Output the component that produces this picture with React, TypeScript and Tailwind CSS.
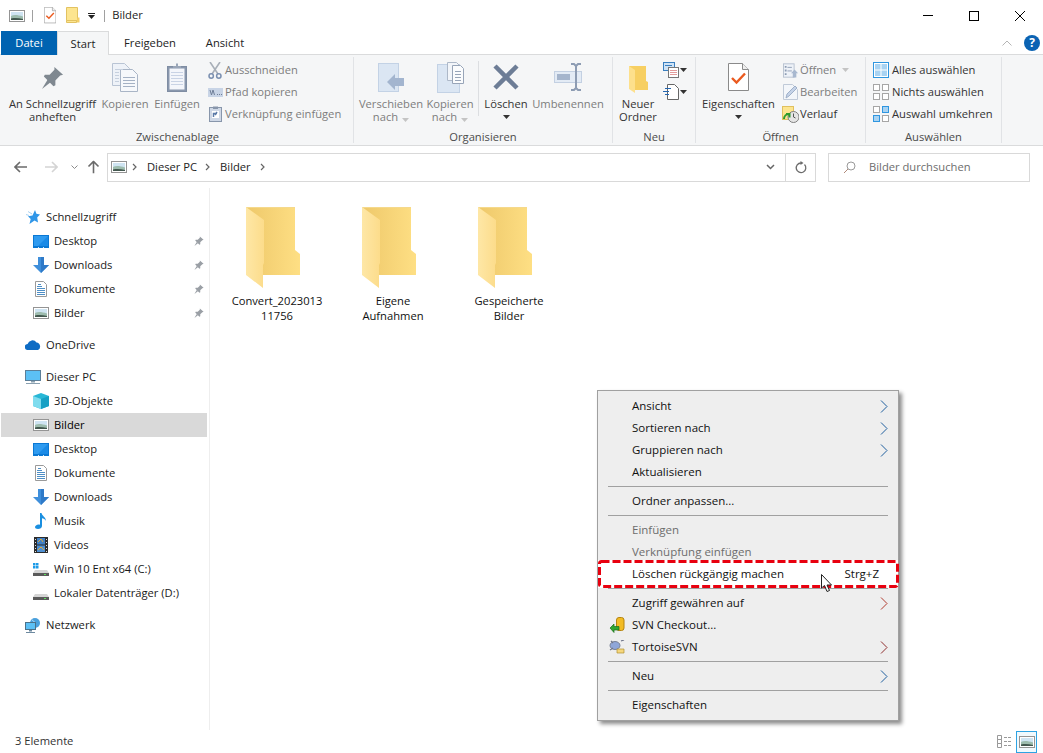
import React from 'react';

const FONT = "font-['Open_Sans','Liberation_Sans',sans-serif]";

// --- icons ---
const PictureIcon = ({ className = '' }: { className?: string }) => (
  <svg viewBox="0 0 16 12" width="16" height="12" className={className}>
    <rect x="0.5" y="0.5" width="15" height="11" fill="#fff" stroke="#949494" />
    <rect x="2" y="2" width="12" height="8" fill="#cfe4f2" />
    <path d="M2 6c3-1.500 7-1 12 .5V10H2z" fill="#9dbcae" />
    <path d="M2 8.500c4-.7 8-.4 12 .5v1H2z" fill="#43584f" />
  </svg>
);

const MiniFolder = () => (
  <svg viewBox="0 0 14 17" width="14" height="17">
    <path d="M.5.5h11v13h-11z" fill="#fde58f" stroke="#e2c261" />
    <path d="M11.500 10.500h2v5h-3z" fill="#f4cf69" />
    <path d="M.5 13.500h10v2h-10z" fill="#fde58f" stroke="#e2c261" />
  </svg>
);

const DocCheck = ({ size = 1 }: { size?: number }) => (
  <svg viewBox="0 0 21 28" width={21 * size} height={28 * size}>
    <path d="M.5.5h14l6 6v21H.5z" fill="#fff" stroke="#8a8a8a" />
    <path d="M14.500.5v6h6" fill="#eee" stroke="#8a8a8a" />
    <path d="M4 15l4.500 4.500L17 10.500" fill="none" stroke="#ea5a1f" strokeWidth="2.400" />
  </svg>
);

const Pin = ({ w = 24, color = '#7f8890' }: { w?: number; color?: string }) => (
  <svg viewBox="0 0 24 24" width={w} height={w}>
    <path d="M14 1l9 8-3 1-5 5 0 5-2 1-10-10 1-2 5 0 5-5z" fill={color} />
    <path d="M7 14l3 3-9 7z" fill={color} />
  </svg>
);

const CopyPages = () => (
  <svg viewBox="0 0 26 29" width="26" height="29">
    <path d="M.5.5h12l5 5v17H.5z" fill="#eef2f8" stroke="#b9c4d4" />
    <path d="M8.500 6.500h12l5 5v17h-17z" fill="#f6f8fb" stroke="#a9b5c6" />
    <path d="M11 14.500h12M11 17.500h12M11 20.500h12M11 23.500h12" stroke="#a4b1c4" />
    <path d="M3 6.500h8M3 9.500h4M3 12.500h4M3 15.500h4M3 18.500h4" stroke="#c6d0de" />
  </svg>
);

const Clipboard = () => (
  <svg viewBox="0 0 20 29" width="20" height="29">
    <rect x="0.5" y="3.500" width="19" height="25" fill="#8997ad" stroke="#7f8da3" />
    <rect x="2.500" y="5.500" width="15" height="21" fill="#f4f6fb" />
    <path d="M4 9.500h12M4 12.500h12M4 15.500h12M4 18.500h12M4 21.500h12" stroke="#c9d3e5" />
    <path d="M6 5V3h3V0.500h2V3h3v2z" fill="#9aa6b8" />
  </svg>
);

const Scissors = () => (
  <svg viewBox="0 0 14 17" width="14" height="17" fill="none">
    <path d="M2 0l8 12M12 0L4 12" stroke="#a8afb8" strokeWidth="1.600" />
    <circle cx="3.200" cy="14" r="2.200" stroke="#7a8fb0" strokeWidth="1.500" />
    <circle cx="10.800" cy="14" r="2.200" stroke="#7a8fb0" strokeWidth="1.500" />
  </svg>
);

const PathIcon = () => (
  <svg viewBox="0 0 15 9" width="15" height="9">
    <rect x="0" y="0" width="15" height="9" fill="#c8d4e6" />
    <path d="M2 2l1.500 5L5 2l1.500 5M9 6.500h1M11 6.500h1M13 6.500h1" stroke="#6f7f98" fill="none" />
  </svg>
);

const ShortcutClip = () => (
  <svg viewBox="0 0 13 16" width="13" height="16">
    <rect x="0.5" y="1.500" width="12" height="14" fill="#cfd8e6" stroke="#8896ab" />
    <path d="M4 0.500h5V3H4z" fill="#8896ab" />
    <rect x="3" y="5" width="7" height="7" fill="#fff" />
    <path d="M4.500 11V7.500H8M8 6l-2 3" stroke="#5c7ba8" strokeWidth="1.500" fill="none" />
  </svg>
);

const MoveTo = () => (
  <svg viewBox="0 0 26 29" width="26" height="29">
    <rect x="0.5" y="0.5" width="20" height="28" fill="#dbe6f3" stroke="#c3d2e5" />
    <path d="M9 19l8-8v4h9v8h-9v4z" fill="#a3b5cf" />
  </svg>
);

const CopyTo = () => (
  <svg viewBox="0 0 27 31" width="27" height="31">
    <rect x="0.5" y="2.500" width="22" height="28" fill="#dbe6f3" stroke="#c3d2e5" />
    <path d="M10.500.5h9l4 4v14h-13z" fill="#f2f5f9" stroke="#adb8c8" />
    <path d="M15.500 3.500h8l3 3v15h-11z" fill="#fbfcfd" stroke="#98a5b8" />
    <path d="M18 9.500h6M18 12.500h6M18 15.500h6M18 18.500h6" stroke="#98a5b8" />
  </svg>
);

const BigX = () => (
  <svg viewBox="0 0 26 26" width="26" height="26">
    <path d="M2 2l22 22M24 2L2 24" stroke="#6d7d96" strokeWidth="4.500" />
  </svg>
);

const RenameIcon = () => (
  <svg viewBox="0 0 28 28" width="28" height="28" fill="none">
    <rect x="0.5" y="8.500" width="27" height="11" fill="#e3ebf5" stroke="#c3d0e2" />
    <rect x="3" y="11" width="13" height="6" fill="#a5b5cc" />
    <path d="M17 1h3l2 2 2-2h3M17 27h3l2-2 2 2h3M22 3v22" stroke="#8d9cb3" strokeWidth="2" />
  </svg>
);

const NewFolder = () => (
  <svg viewBox="0 0 19 27" width="19" height="27" className="mt-[4px]">
    <path d="M0 0h17v15l2 1v8H6V17z" fill="#f7cf62" />
    <path d="M0 0l6 4v23l-6-4z" fill="#fde08c" />
  </svg>
);

const NewFile = () => (
  <svg viewBox="0 0 16 16" width="16" height="16" fill="none">
    <path d="M4.500.5h7l4 4v11h-11z" fill="#fff" stroke="#666" />
    <path d="M2 4.500h6M0 7.500h6M2 10.500h4" stroke="#2466b0" />
  </svg>
);

const EasyAccess = () => (
  <svg viewBox="0 0 16 16" width="16" height="16">
    <rect x="0.5" y="0.5" width="11" height="8" fill="#cfe3f6" stroke="#3a7fbf" />
    <path d="M2 3.500h7" stroke="#3a7fbf" />
    <rect x="5.500" y="5.500" width="10" height="10" fill="#fff" stroke="#777" />
    <path d="M7 8.500h7M7 10.500h7M7 12.500h7" stroke="#e39c9c" />
  </svg>
);

const OpenSmall = () => (
  <svg viewBox="0 0 18 16" width="16" height="15">
    <rect x="0.5" y="0.5" width="12" height="15" fill="#eef2f8" stroke="#b5bfce" />
    <path d="M2 3h2v2H2zM2 7h2v2H2zM2 11h2v2H2z" fill="#8d9cb3" />
    <path d="M5 4.500h5M5 8.500h5" stroke="#8d9cb3" />
    <path d="M13 7l4 4h-2v5h-4v-5H9z" fill="#a8b8cf" />
  </svg>
);

const EditSmall = () => (
  <svg viewBox="0 0 15 16" width="15" height="16">
    <path d="M.5.5h9l5 5v10H.5z" fill="#f3f6fa" stroke="#c0cad8" />
    <path d="M3 14l1-4 8-8 2 2-8 8z" fill="#c5d3e8" stroke="#9fb0c9" />
  </svg>
);

const HistorySmall = () => (
  <svg viewBox="0 0 17 17" width="17" height="17">
    <rect x="0.5" y="0.5" width="11" height="13" fill="#fde58f" stroke="#e0c05f" />
    <circle cx="11.500" cy="11" r="5.500" fill="#e5e5e5" stroke="#7f7f7f" />
    <path d="M11.500 7.500V11l2 1" stroke="#555" fill="none" />
    <path d="M2 13a5 5 0 0 1 5-5M4 8h3.500v3.500" fill="none" stroke="#2f9a2c" strokeWidth="2" />
  </svg>
);

const SelectGrid = ({ variant }: { variant: 'all' | 'none' | 'invert' }) => {
  const cells = [
    [0, 0],
    [9, 0],
    [0, 9],
    [9, 9],
  ];
  return (
    <svg viewBox="0 0 16 16" width="16" height="16">
      {variant === 'all' && <rect x="0.5" y="0.5" width="15" height="15" fill="#fff" stroke="#2f96e0" />}
      {cells.map(([x, y], i) => {
        const on = variant === 'all' || (variant === 'invert' && (i === 1 || i === 2));
        if (variant === 'all') {
          return <rect key={i} x={x === 0 ? 2 : 8.500} y={y === 0 ? 2 : 8.500} width="5.500" height="5.500" fill="#a9d3f2" />;
        }
        return (
          <rect
            key={i}
            x={x + 0.5}
            y={y + 0.5}
            width="6"
            height="6"
            fill={on ? '#a9d3f2' : '#fff'}
            stroke={on ? '#2f96e0' : '#a6a6a6'}
          />
        );
      })}
    </svg>
  );
};

const Caret = ({ color = '#333' }: { color?: string }) => (
  <svg viewBox="0 0 7 4" width="7" height="4" className="inline-block">
    <path d="M0 0h7L3.500 4z" fill={color} />
  </svg>
);

const Crumb = () => (
  <svg viewBox="0 0 5 8" width="5" height="8">
    <path d="M1 1l3 3-3 3" fill="none" stroke="#666" strokeWidth="1.200" />
  </svg>
);

const Arrow = ({ color, rotate }: { color: string; rotate: string }) => (
  <svg viewBox="0 0 13 12" width="13" height="12" className={rotate}>
    <path d="M6 1L1 6l5 5M1 6h12" fill="none" stroke={color} strokeWidth="1.600" />
  </svg>
);

// navigation pane icons
const DesktopIcon = () => (
  <svg viewBox="0 0 16 13" width="16" height="13">
    <rect x="0" y="0" width="16" height="13" fill="#0a78d4" />
    <path d="M1 1h14v10H1z" fill="#2f9bf0" />
    <path d="M15 1v10H5z" fill="#1a8ae6" />
    <path d="M5 12h1v1H5zM10 12h1v1h-1z" fill="#cfe8fb" />
  </svg>
);

const DownloadIcon = () => (
  <svg viewBox="0 0 16 16" width="16" height="16">
    <path d="M5 0h6v8h5l-8 8-8-8h5z" fill="#3f8fdb" />
    <path d="M8 0h3v8h5l-8 8z" fill="#2f7ac8" />
  </svg>
);

const DocIcon = () => (
  <svg viewBox="0 0 12 16" width="12" height="16">
    <path d="M.5.5h8l3 3v12H.5z" fill="#fff" stroke="#9a9a9a" />
    <path d="M3 3.500h3M2 5.500h5M2 7.500h8M2 9.500h8M2 11.500h8M2 13.500h8" stroke="#4f8fc6" />
  </svg>
);

const StarIcon = () => (
  <svg viewBox="0 0 14 14" width="14" height="14">
    <path d="M9 0l1.400 3.800L14 4.500l-2.800 3 .8 5L8.500 10.500 3.500 14l1.200-5L2 6.300 6.500 5.500z" fill="#2f96e8" />
    <path d="M2 1.500l4 2.500M0 4.500l3 1" stroke="#a8d2f2" />
  </svg>
);

const CloudIcon = () => (
  <svg viewBox="0 0 16 10" width="16" height="10">
    <path d="M3 10a3 3 0 0 1-.4-6A5 5 0 0 1 11.500 2.500 4 4 0 0 1 13 10z" fill="#0e6cc4" />
  </svg>
);

const PcIcon = () => (
  <svg viewBox="0 0 16 14" width="16" height="14">
    <rect x="0.5" y="0.5" width="15" height="10" fill="#5cc0f5" stroke="#5b7f99" />
    <path d="M6 11h4v1.500H6zM1 13h14v1H1z" fill="#8aa0b0" />
  </svg>
);

const CubeIcon = () => (
  <svg viewBox="0 0 16 16" width="16" height="16">
    <path d="M8 0l8 3v10l-8 3-8-3V3z" fill="#28b7d6" />
    <path d="M8 6l8-3v10l-8 3z" fill="#16a0c4" />
    <path d="M0 3l8 3v10l-8-3z" fill="#7fdcee" />
  </svg>
);

const MusicIcon = () => (
  <svg viewBox="0 0 12 16" width="12" height="16">
    <path d="M5 0h1.500c.5 3 4.500 4 4.500 8-1-2-2.500-2.500-4-2.800V13c0 2-2 3-4 3s-3-1-3-2 1.500-2.500 3.500-2.500c.5 0 1 0 1.500.2z" fill="#1a8fe0" />
  </svg>
);

const VideoIcon = () => (
  <svg viewBox="0 0 14 16" width="14" height="16">
    <rect width="14" height="16" fill="#2c2c2c" />
    <rect x="3" y="1" width="8" height="6.500" fill="#3f7fc4" />
    <rect x="3" y="8.500" width="8" height="6.500" fill="#4f8fd0" />
    <path d="M4 5l3-3 2 3M4 13l3-3 3 3" stroke="#e0a93a" fill="none" />
    <path d="M1 2.500h1M1 5.500h1M1 8.500h1M1 11.500h1M1 14.500h1M12 2.500h1M12 5.500h1M12 8.500h1M12 11.500h1M12 14.500h1" stroke="#ddd" />
  </svg>
);

const DriveIcon = ({ win = false }: { win?: boolean }) => (
  <svg viewBox="0 0 16 13" width="16" height="13">
    {win && <path d="M0 0h2.500v2.500H0zM3 0h2.500v2.500H3zM0 3h2.500v2.500H0zM3 3h2.500v2.500H3z" fill="#1d9be8" />}
    <path d="M2 7h12l2 3v3H0v-3z" fill="#d5d5d5" />
    <rect x="0" y="10" width="16" height="3" fill="#5b5b5b" />
    <rect x="11" y="11" width="2" height="1" fill="#5ee05e" />
  </svg>
);

const NetworkIcon = () => (
  <svg viewBox="0 0 16 15" width="16" height="15">
    <circle cx="10" cy="5" r="5" fill="#4aa0dc" />
    <path d="M7 2c2 1 4 3 3 7" stroke="#cfe8fb" fill="none" />
    <rect x="0.5" y="4.500" width="10" height="7" fill="#5cc0f5" stroke="#4b7189" />
    <path d="M4 12h3v1.500H4zM1 14h9v1H1z" fill="#6e8aa0" />
  </svg>
);

const BigFolder = () => (
  <svg viewBox="0 0 54 81" width="54" height="81" className="mr-[8px] block">
    <defs>
      <linearGradient id="fb" x1="0" x2="1" y1="0" y2="0">
        <stop offset="0" stopColor="#eec86a" />
        <stop offset="1" stopColor="#fedf84" />
      </linearGradient>
      <linearGradient id="ff" x1="0" x2="1" y1="0" y2="0">
        <stop offset="0" stopColor="#fee7a6" />
        <stop offset="1" stopColor="#fcdc8b" />
      </linearGradient>
    </defs>
    <path d="M0 0h49v43l5 4v21H17z" fill="url(#fb)" />
    <path d="M0 0h49v1H0z" fill="#f5d98c" />
    <path d="M0 0l18 13v43l-1 2v23L0 68z" fill="url(#ff)" />
  </svg>
);

const SvgCheckout = () => (
  <svg viewBox="0 0 16 16" width="16" height="16">
    <rect x="7.500" y="0.500" width="7.500" height="13" rx="2.500" fill="#f2bb24" stroke="#b58410" />
    <path d="M1 11l4-4v2.500h5V13H5v2.500z" fill="#2fa52f" stroke="#1b701b" strokeWidth="0.700" />
  </svg>
);

const SvgTortoise = () => (
  <svg viewBox="0 0 16 14" width="16" height="14">
    <ellipse cx="6" cy="5.500" rx="5" ry="4" fill="#8fa6d8" stroke="#7a8296" />
    <path d="M1 10l3-2M2 1l2 2M12 1l3-1" stroke="#70768a" strokeWidth="1.300" />
    <path d="M8 9h7v4H8z" fill="#f6d77d" stroke="#b08f30" strokeWidth="0.700" />
  </svg>
);

const MenuChevron = ({ color = '#1f5f9e' }: { color?: string }) => (
  <svg viewBox="0 0 8 13" width="8" height="13">
    <path d="M1 .5l6 6-6 6" fill="none" stroke={color} strokeWidth="1" />
  </svg>
);

const CursorIcon = () => (
  <svg viewBox="0 0 13 19" width="13" height="19">
    <path d="M.5.5v13.500l3-2.500 2.500 6 2.500-1-2.500-5.500h4.500z" fill="#fff" stroke="#222" />
  </svg>
);

// --- ribbon parts ---
const Group = ({ label, width, children }: { label: string; width: string; children: React.ReactNode }) => (
  <div className={`${width} flex flex-col border-r border-[#e1e3e6]`}>
    <div className="flex h-[72px] items-start">{children}</div>
    <div className="mt-auto h-[15px] text-center leading-[17px] text-[#4c4c4c]">{label}</div>
  </div>
);

const LargeButton = ({
  icon,
  lines,
  width,
  disabled = false,
  caret,
}: {
  icon: React.ReactNode;
  lines: string[];
  width: string;
  disabled?: boolean;
  caret?: 'line1' | 'line2';
}) => (
  <div className={`${width} flex flex-col items-center ${disabled ? 'text-[#7d7d7d]' : 'text-[#333]'}`}>
    <div className="flex h-[40px] items-center justify-center">{icon}</div>
    {lines.map((l, i) => (
      <div key={i} className="whitespace-nowrap leading-[13px]">
        {l}
        {caret === 'line2' && i === 1 && (
          <span className="ml-1 align-middle">
            <Caret color="#c4c4c4" />
          </span>
        )}
      </div>
    ))}
    {caret === 'line1' && (
      <div className="flex h-[13px] items-center">
        <Caret />
      </div>
    )}
  </div>
);

const SmallButton = ({
  icon,
  label,
  disabled = false,
  iconWidth = 'w-[18px]',
  caret = false,
}: {
  icon: React.ReactNode;
  label: string;
  disabled?: boolean;
  iconWidth?: string;
  caret?: boolean;
}) => (
  <div className={`flex h-[22px] items-center whitespace-nowrap ${disabled ? 'text-[#7d7d7d]' : 'text-[#333]'}`}>
    <span className={`${iconWidth} flex justify-center`}>{icon}</span>
    <span className="ml-[1px]">{label}</span>
    {caret && (
      <span className="ml-[6px] flex items-center">
        <Caret color="#c4c4c4" />
      </span>
    )}
  </div>
);

const Ribbon = () => (
  <div className="flex h-[92px] shrink-0 border-y border-[#dadbdc] bg-[#f5f6f7] pb-[2px] pl-[2px] pt-[2px]">
    <Group label="Zwischenablage" width="w-[352px]">
      <div className="flex w-full">
        <div className="w-[3px]" />
        <LargeButton icon={<Pin w={23} />} lines={['An Schnellzugriff', 'anheften']} width="w-[95px]" />
        <LargeButton icon={<CopyPages />} lines={['Kopieren']} width="w-[50px]" disabled />
        <LargeButton icon={<Clipboard />} lines={['Einfügen']} width="w-[54px]" disabled />
        <div className="ml-[2px] flex flex-col pt-[2px]">
          <SmallButton icon={<Scissors />} label="Ausschneiden" disabled />
          <SmallButton icon={<PathIcon />} label="Pfad kopieren" disabled />
          <SmallButton icon={<ShortcutClip />} label="Verknüpfung einfügen" disabled />
        </div>
      </div>
    </Group>
    <Group label="Organisieren" width="w-[259px]">
      <div className="flex w-full">
        <div className="w-[6px]" />
        <LargeButton icon={<MoveTo />} lines={['Verschieben', 'nach']} width="w-[62px]" disabled caret="line2" />
        <LargeButton icon={<CopyTo />} lines={['Kopieren', 'nach']} width="w-[56px]" disabled caret="line2" />
        <div className="my-[4px] h-[55px] w-px bg-[#dcdee1]" />
        <LargeButton icon={<BigX />} lines={['Löschen']} width="w-[54px]" caret="line1" />
        <LargeButton icon={<RenameIcon />} lines={['Umbenennen']} width="w-[70px]" disabled />
      </div>
    </Group>
    <Group label="Neu" width="w-[83px]">
      <div className="flex w-full">
        <div className="w-[1px]" />
        <LargeButton icon={<NewFolder />} lines={['Neuer', 'Ordner']} width="w-[48px]" />
        <div className="flex flex-col gap-[6px] pl-[1px] pt-[5px]">
          <div className="flex items-center gap-[1px]">
            <EasyAccess />
            <Caret />
          </div>
          <div className="flex items-center gap-[1px]">
            <NewFile />
            <Caret />
          </div>
        </div>
      </div>
    </Group>
    <Group label="Öffnen" width="w-[170px]">
      <div className="flex w-full">
        <div className="w-[6px]" />
        <LargeButton icon={<DocCheck />} lines={['Eigenschaften']} width="w-[73px]" caret="line1" />
        <div className="ml-[7px] flex flex-col pt-[2px]">
          <SmallButton iconWidth="w-[17px]" icon={<OpenSmall />} label="Öffnen" disabled caret />
          <SmallButton iconWidth="w-[17px]" icon={<EditSmall />} label="Bearbeiten" disabled />
          <SmallButton iconWidth="w-[17px]" icon={<HistorySmall />} label="Verlauf" />
        </div>
      </div>
    </Group>
    <Group label="Auswählen" width="w-[136px]">
      <div className="flex flex-col pl-[7px] pt-[2px]">
        <SmallButton iconWidth="w-[18px] pr-[2px]" icon={<SelectGrid variant="all" />} label="Alles auswählen" />
        <SmallButton iconWidth="w-[18px] pr-[2px]" icon={<SelectGrid variant="none" />} label="Nichts auswählen" />
        <SmallButton iconWidth="w-[18px] pr-[2px]" icon={<SelectGrid variant="invert" />} label="Auswahl umkehren" />
      </div>
    </Group>
  </div>
);

const NavRow = ({
  icon,
  label,
  indent = false,
  pinned = false,
  selected = false,
}: {
  icon: React.ReactNode;
  label: string;
  indent?: boolean;
  pinned?: boolean;
  selected?: boolean;
}) => (
  <div className={`flex h-[24px] items-center ${selected ? 'bg-[#d9d9d9]' : ''} ml-[1px] mr-[2px]`}>
    <span className={`flex w-[16px] justify-center ${indent ? 'ml-[32px]' : 'ml-[24px]'}`}>{icon}</span>
    <span className={`ml-[5px] ${selected ? 'text-black' : 'text-[#1a1a1a]'}`}>{label}</span>
    {pinned && (
      <span className="ml-auto mr-[3px] flex">
        <Pin w={10} color="#9a9fa5" />
      </span>
    )}
  </div>
);

const Sidebar = () => (
  <div className="h-full w-[210px] shrink-0 border-r border-[#eeeeee] pt-[17px]">
    <NavRow icon={<StarIcon />} label="Schnellzugriff" />
    <NavRow icon={<DesktopIcon />} label="Desktop" indent pinned />
    <NavRow icon={<DownloadIcon />} label="Downloads" indent pinned />
    <NavRow icon={<DocIcon />} label="Dokumente" indent pinned />
    <NavRow icon={<PictureIcon />} label="Bilder" indent pinned />
    <div className="h-[8px]" />
    <NavRow icon={<CloudIcon />} label="OneDrive" />
    <div className="h-[8px]" />
    <NavRow icon={<PcIcon />} label="Dieser PC" />
    <NavRow icon={<CubeIcon />} label="3D-Objekte" indent />
    <NavRow icon={<PictureIcon />} label="Bilder" indent selected />
    <NavRow icon={<DesktopIcon />} label="Desktop" indent />
    <NavRow icon={<DocIcon />} label="Dokumente" indent />
    <NavRow icon={<DownloadIcon />} label="Downloads" indent />
    <NavRow icon={<MusicIcon />} label="Musik" indent />
    <NavRow icon={<VideoIcon />} label="Videos" indent />
    <NavRow icon={<DriveIcon win />} label="Win 10 Ent x64 (C:)" indent />
    <NavRow icon={<DriveIcon />} label="Lokaler Datenträger (D:)" indent />
    <div className="h-[8px]" />
    <NavRow icon={<NetworkIcon />} label="Netzwerk" />
  </div>
);

const FolderItem = ({ lines }: { lines: string[] }) => (
  <div className="flex w-[116px] flex-col items-center">
    <BigFolder />
    <div className="mt-[5px] text-center leading-[15px] text-[#111]">
      {lines.map((l) => (
        <div key={l}>{l}</div>
      ))}
    </div>
  </div>
);

const MenuRow = ({
  label,
  disabled = false,
  chevron,
  icon,
}: {
  label: string;
  disabled?: boolean;
  chevron?: string;
  icon?: React.ReactNode;
}) => (
  <div className={`flex h-[22px] items-center ${disabled ? 'text-[#6d6d6d]' : 'text-[#111]'}`}>
    <span className="flex w-[34px] justify-center pl-[4px]">{icon}</span>
    <span>{label}</span>
    {chevron && (
      <span className="ml-auto mr-[10px] flex">
        <MenuChevron color={chevron} />
      </span>
    )}
  </div>
);

const Sep = () => <div className="mx-[10px] my-[3px] h-px bg-[#a0a0a0]" />;

const ContextMenu = () => (
  <div className="absolute left-[597px] top-[390px] w-[302px] border border-[#a0a0a0] bg-[#eeeeee] py-[4px] text-[11.5px] shadow-[3px_3px_4px_rgba(0,0,0,0.45)]">
    <MenuRow label="Ansicht" chevron="#1f5f9e" />
    <MenuRow label="Sortieren nach" chevron="#1f5f9e" />
    <MenuRow label="Gruppieren nach" chevron="#1f5f9e" />
    <MenuRow label="Aktualisieren" />
    <Sep />
    <MenuRow label="Ordner anpassen..." />
    <Sep />
    <MenuRow label="Einfügen" disabled />
    <MenuRow label="Verknüpfung einfügen" disabled />
    <div className="relative flex h-[22px] items-center text-[#111]">
      {/* red marker drawn over the row */}
      <div className="absolute inset-x-0 inset-y-[-3px] bg-white">
        <svg width="301" height="28" viewBox="0 0 301 28" fill="none" className="block">
          <rect x="1.500" y="1.500" width="298" height="25" rx="2" stroke="#e8000f" strokeWidth="3" strokeDasharray="8 3" />
        </svg>
      </div>
      <span className="relative ml-[34px]">Löschen rückgängig machen</span>
      <span className="relative ml-auto mr-[19px]">Strg+Z</span>
    </div>
    <Sep />
    <MenuRow label="Zugriff gewähren auf" chevron="#b03a2e" />
    <MenuRow label="SVN Checkout..." icon={<SvgCheckout />} />
    <MenuRow label="TortoiseSVN" chevron="#8f2f2f" icon={<SvgTortoise />} />
    <Sep />
    <MenuRow label="Neu" chevron="#1f5f9e" />
    <Sep />
    <MenuRow label="Eigenschaften" />
  </div>
);

export default function App() {
  return (
    <div className={`${FONT} relative flex h-screen flex-col overflow-hidden bg-white text-[11.2px] text-[#222]`}>
      {/* title bar */}
      <div className="flex h-[31px] shrink-0 items-center pl-[9px]">
        <PictureIcon />
        <div className="mx-[7px] h-[12px] w-px bg-[#a0a0a0]" />
        <span className="ml-[4px] flex">
          <DocCheck size={0.58} />
        </span>
        <span className="ml-[10px] flex">
          <MiniFolder />
        </span>
        <span className="ml-[8px] flex flex-col items-center gap-[1px]">
          <span className="h-px w-[7px] bg-[#222]" />
          <Caret color="#222" />
        </span>
        <div className="ml-[9px] mr-[7px] h-[12px] w-px bg-[#a0a0a0]" />
        <span className="text-[#222]">Bilder</span>
        <div className="ml-auto flex items-center">
          <span className="flex w-[46px] justify-center">
            <span className="h-px w-[10px] bg-black" />
          </span>
          <span className="flex w-[46px] justify-center">
            <span className="h-[10px] w-[10px] border border-black" />
          </span>
          <span className="flex w-[46px] justify-center">
            <svg viewBox="0 0 10 10" width="10" height="10">
              <path d="M0 0l10 10M10 0L0 10" stroke="#000" />
            </svg>
          </span>
        </div>
      </div>

      {/* tabs */}
      <div className="relative z-10 mb-[-1px] flex h-[24px] shrink-0 pl-[1px]">
        <div className="flex w-[56px] items-center justify-center bg-[#0063b1] pt-[1px] text-white">Datei</div>
        <div className="flex w-[52px] items-center justify-center border-x border-t border-[#dadbdc] bg-[#f5f6f7] pt-[1px]">Start</div>
        <div className="flex w-[82px] items-center justify-center pt-[1px]">Freigeben</div>
        <div className="flex w-[68px] items-center justify-center pt-[1px]">Ansicht</div>
        <div className="ml-auto flex items-center pr-[3px]">
          <svg viewBox="0 0 10 6" width="10" height="6" className="mr-[12px]">
            <path d="M.5 5.500L5 1l4.500 4.500" fill="none" stroke="#b5b5b5" />
          </svg>
          <span className="flex h-[16px] w-[16px] items-center justify-center rounded-full bg-[#0b63b3] text-[12px] font-bold text-white">?</span>
        </div>
      </div>

      <Ribbon />

      {/* address bar */}
      <div className="flex h-[42px] shrink-0 items-center">
        <span className="ml-[14px] flex">
          <Arrow color="#6b6b6b" rotate="" />
        </span>
        <span className="ml-[18px] flex">
          <Arrow color="#d4d4d4" rotate="rotate-180" />
        </span>
        <span className="ml-[13px] flex">
          <svg viewBox="0 0 7 4" width="7" height="4">
            <path d="M.5.500L3.500 3.500 6.500.500" fill="none" stroke="#8a8a8a" />
          </svg>
        </span>
        <span className="ml-[9px] flex">
          <Arrow color="#6b6b6b" rotate="rotate-90" />
        </span>
        <div className="ml-[7px] flex h-[29px] w-[709px] items-center border border-[#d9d9d9]">
          <span className="ml-[3px] flex">
            <PictureIcon />
          </span>
          <span className="ml-[5px] flex">
            <Crumb />
          </span>
          <span className="ml-[10px] text-[#222]">Dieser PC</span>
          <span className="ml-[8px] flex">
            <Crumb />
          </span>
          <span className="ml-[10px] text-[#222]">Bilder</span>
          <span className="ml-[9px] flex">
            <Crumb />
          </span>
          <span className="ml-auto mr-[10px] flex">
            <svg viewBox="0 0 9 6" width="9" height="6">
              <path d="M1 1l3.500 3.500L8 1" fill="none" stroke="#666" strokeWidth="1.500" />
            </svg>
          </span>
          <span className="flex h-full w-[30px] items-center justify-center border-l border-[#d9d9d9]">
            <svg viewBox="0 0 12 13" width="12" height="13" fill="none">
              <path d="M9.500 3.500a4.800 4.800 0 1 1-3.500-1.500" stroke="#6b6b6b" strokeWidth="1.300" />
              <path d="M5.500 0v4l3-2z" fill="#6b6b6b" />
            </svg>
          </span>
        </div>
        <div className="ml-[12px] flex h-[29px] w-[202px] items-center border border-[#d9d9d9] text-[#6d6d6d]">
          <span className="ml-[14px] flex">
            <svg viewBox="0 0 13 13" width="13" height="13" fill="none">
              <circle cx="8" cy="5" r="4" stroke="#9a9a9a" />
              <path d="M5 8l-4 4" stroke="#b08a7a" />
            </svg>
          </span>
          <span className="ml-[13px]">Bilder durchsuchen</span>
        </div>
      </div>

      {/* main area */}
      <div className="flex min-h-0 flex-1">
        <Sidebar />
        <div className="flex flex-1 items-start pl-[9px] pt-[19px]">
          <FolderItem lines={['Convert_2023013', '11756']} />
          <FolderItem lines={['Eigene', 'Aufnahmen']} />
          <FolderItem lines={['Gespeicherte', 'Bilder']} />
        </div>
      </div>

      {/* status bar */}
      <div className="flex h-[23px] shrink-0 items-center pl-[15px] text-[#333]">
        <span className="mb-[1px]">3 Elemente</span>
        <div className="ml-auto flex items-center pr-[6px]">
          <svg viewBox="0 0 15 13" width="15" height="13" className="mr-[4px]">
            <path d="M.5.5h4v4h-4zM.5 4.500h4v4h-4zM.5 8.500h4v4h-4z" fill="#fff" stroke="#999" />
            <path d="M7 2.500h3M11 2.500h3M7 6.500h3M11 6.500h3M7 10.500h3M11 10.500h3" stroke="#999" />
          </svg>
          <span className="flex h-[22px] w-[21px] items-center justify-center border border-[#2ea3e3] bg-[#f1f9fd]">
            <PictureIcon />
          </span>
        </div>
      </div>

      <ContextMenu />
      <span className="absolute left-[821px] top-[574px] flex">
        <CursorIcon />
      </span>
    </div>
  );
}
